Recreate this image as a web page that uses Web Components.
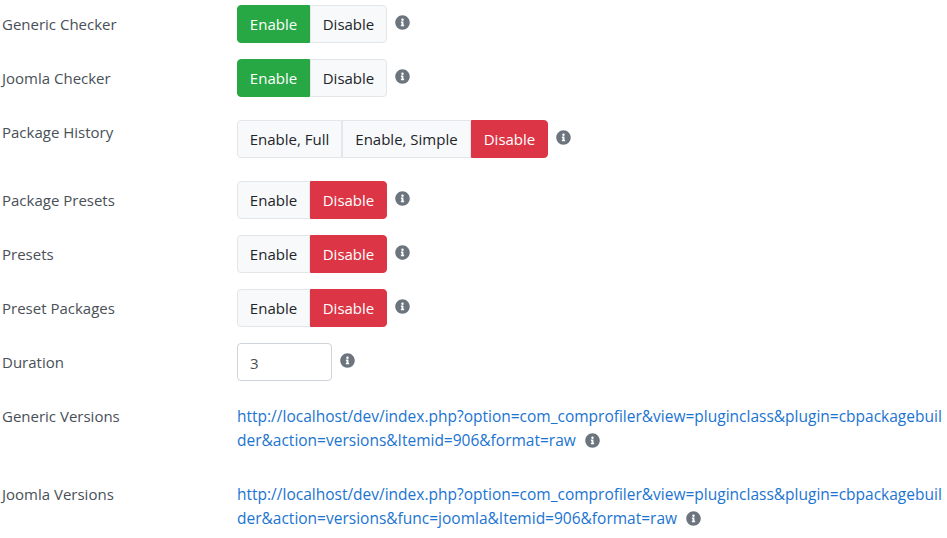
<!DOCTYPE html>
<html lang="en">
<head>
<meta charset="utf-8">
<title>Package settings</title>
<style>
    body {
        margin: 0;
        background: #fff;
        color: #212529;
        font-family: "Open Sans", "Noto Sans", sans-serif;
        font-size: 15px;
        line-height: 24px;
    }
    .form {
        display: flex;
        flex-direction: column;
        padding: 5px 0 0 2px;
    }
</style>
</head>
<body>
<div class="form">
    <pb-row label="Generic Checker">
        <pb-toggle><pb-option kind="success" style="width:73px">Enable</pb-option><pb-option style="width:77px">Disable</pb-option></pb-toggle>
        <pb-info></pb-info>
    </pb-row>
    <pb-row label="Joomla Checker">
        <pb-toggle><pb-option kind="success" style="width:73px">Enable</pb-option><pb-option style="width:77px">Disable</pb-option></pb-toggle>
        <pb-info></pb-info>
    </pb-row>
    <pb-row label="Package History" inset>
        <pb-toggle><pb-option style="width:105px">Enable, Full</pb-option><pb-option style="width:129px">Enable, Simple</pb-option><pb-option kind="danger" style="width:77px">Disable</pb-option></pb-toggle>
        <pb-info></pb-info>
    </pb-row>
    <pb-row label="Package Presets">
        <pb-toggle><pb-option style="width:73px">Enable</pb-option><pb-option kind="danger" style="width:77px">Disable</pb-option></pb-toggle>
        <pb-info></pb-info>
    </pb-row>
    <pb-row label="Presets">
        <pb-toggle><pb-option style="width:73px">Enable</pb-option><pb-option kind="danger" style="width:77px">Disable</pb-option></pb-toggle>
        <pb-info></pb-info>
    </pb-row>
    <pb-row label="Preset Packages">
        <pb-toggle><pb-option style="width:73px">Enable</pb-option><pb-option kind="danger" style="width:77px">Disable</pb-option></pb-toggle>
        <pb-info></pb-info>
    </pb-row>
    <pb-row label="Duration">
        <pb-number value="3"></pb-number>
        <pb-info></pb-info>
    </pb-row>
    <pb-row label="Generic Versions">
        <pb-url href="http://localhost/dev/index.php?option=com_comprofiler&amp;view=pluginclass&amp;plugin=cbpackagebuilder&amp;action=versions&amp;Itemid=906&amp;format=raw"></pb-url>
    </pb-row>
    <pb-row label="Joomla Versions">
        <pb-url href="http://localhost/dev/index.php?option=com_comprofiler&amp;view=pluginclass&amp;plugin=cbpackagebuilder&amp;action=versions&amp;func=joomla&amp;Itemid=906&amp;format=raw"></pb-url>
    </pb-row>
</div>

<script>
const INFO_PATH = 'M256 8C119.043 8 8 119.083 8 256c0 136.997 111.043 248 248 248s248-111.003 248-248C504 119.083 392.957 8 256 8zm0 110c23.196 0 42 18.804 42 42s-18.804 42-42 42-42-18.804-42-42 18.804-42 42-42zm56 254c0 6.627-5.373 12-12 12h-88c-6.627 0-12-5.373-12-12v-24c0-6.627 5.373-12 12-12h12v-64h-12c-6.627 0-12-5.373-12-12v-24c0-6.627 5.373-12 12-12h64c6.627 0 12 5.373 12 12v100h12c6.627 0 12 5.373 12 12v24z';

class PbInfo extends HTMLElement {
    constructor() {
        super();
        this.attachShadow({ mode: 'open' });
    }

    connectedCallback() {
        this.shadowRoot.innerHTML = `
            <style>
                :host {
                    display: inline-block;
                    width: 15px;
                    height: 15px;
                    margin: 10px 0 0 8px;
                    flex: none;
                }
                svg { display: block; width: 15px; height: 15px; fill: #6c757d; }
            </style>
            <svg viewBox="0 0 512 512"><path d="${INFO_PATH}"></path></svg>
        `;
    }
}

class PbRow extends HTMLElement {
    constructor() {
        super();
        this.attachShadow({ mode: 'open' });
    }

    connectedCallback() {
        this.shadowRoot.innerHTML = `
            <style>
                :host {
                    display: grid;
                    grid-template-columns: 235px 1fr;
                    margin-bottom: 16px;
                }
                .label {
                    padding-top: 7px;
                    color: #495057;
                }
                .control {
                    display: flex;
                    align-items: flex-start;
                    min-width: 0;
                }
                :host([inset]) .control { padding: 7px 0; }
            </style>
            <div class="label">${this.getAttribute('label') || ''}</div>
            <div class="control"><slot></slot></div>
        `;
    }
}

class PbToggle extends HTMLElement {
    constructor() {
        super();
        this.attachShadow({ mode: 'open' });
    }

    connectedCallback() {
        this.shadowRoot.innerHTML = `
            <style>
                :host { display: inline-flex; }
            </style>
            <slot></slot>
        `;
    }
}

class PbOption extends HTMLElement {
    constructor() {
        super();
        this.attachShadow({ mode: 'open' });
    }

    connectedCallback() {
        this.shadowRoot.innerHTML = `
            <style>
                :host {
                    display: block;
                    box-sizing: border-box;
                    height: 38px;
                    padding: 6px 0;
                    border: 1px solid #e3e7ea;
                    background: #f8f9fa;
                    color: #212529;
                    text-align: center;
                    white-space: nowrap;
                }
                :host(:first-child) { border-radius: 4px 0 0 4px; }
                :host(:last-child) { border-radius: 0 4px 4px 0; }
                :host([kind="success"]) { background: #28a745; border-color: #28a745; color: #fff; }
                :host([kind="danger"]) { background: #dc3545; border-color: #dc3545; color: #fff; }
            </style>
            <slot></slot>
        `;
    }
}

class PbNumber extends HTMLElement {
    constructor() {
        super();
        this.attachShadow({ mode: 'open' });
    }

    connectedCallback() {
        this.shadowRoot.innerHTML = `
            <style>
                :host { display: block; }
                input {
                    display: block;
                    box-sizing: border-box;
                    width: 95px;
                    height: 38px;
                    padding: 7px 12px 5px;
                    border: 1px solid #ced4da;
                    border-radius: 4px;
                    background: #fff;
                    color: #495057;
                    font: inherit;
                }
            </style>
            <input type="text" value="${this.getAttribute('value') || ''}">
        `;
    }
}

class PbUrl extends HTMLElement {
    constructor() {
        super();
        this.attachShadow({ mode: 'open' });
    }

    connectedCallback() {
        const href = this.getAttribute('href') || '';
        this.shadowRoot.innerHTML = `
            <style>
                :host { display: block; padding: 7px 4px 7px 0; min-width: 0; font-size: 15.5px; }
                a { color: #1b74d1; text-decoration: none; word-break: break-all; }
                pb-info { display: inline-block; margin: 0 0 0 5px; vertical-align: -2px; }
            </style>
            <a></a> <pb-info></pb-info>
        `;
        this.shadowRoot.querySelector('a').href = href;
        this.shadowRoot.querySelector('a').textContent = href;
    }
}

customElements.define('pb-info', PbInfo);
customElements.define('pb-row', PbRow);
customElements.define('pb-toggle', PbToggle);
customElements.define('pb-option', PbOption);
customElements.define('pb-number', PbNumber);
customElements.define('pb-url', PbUrl);
</script>
</body>
</html>
